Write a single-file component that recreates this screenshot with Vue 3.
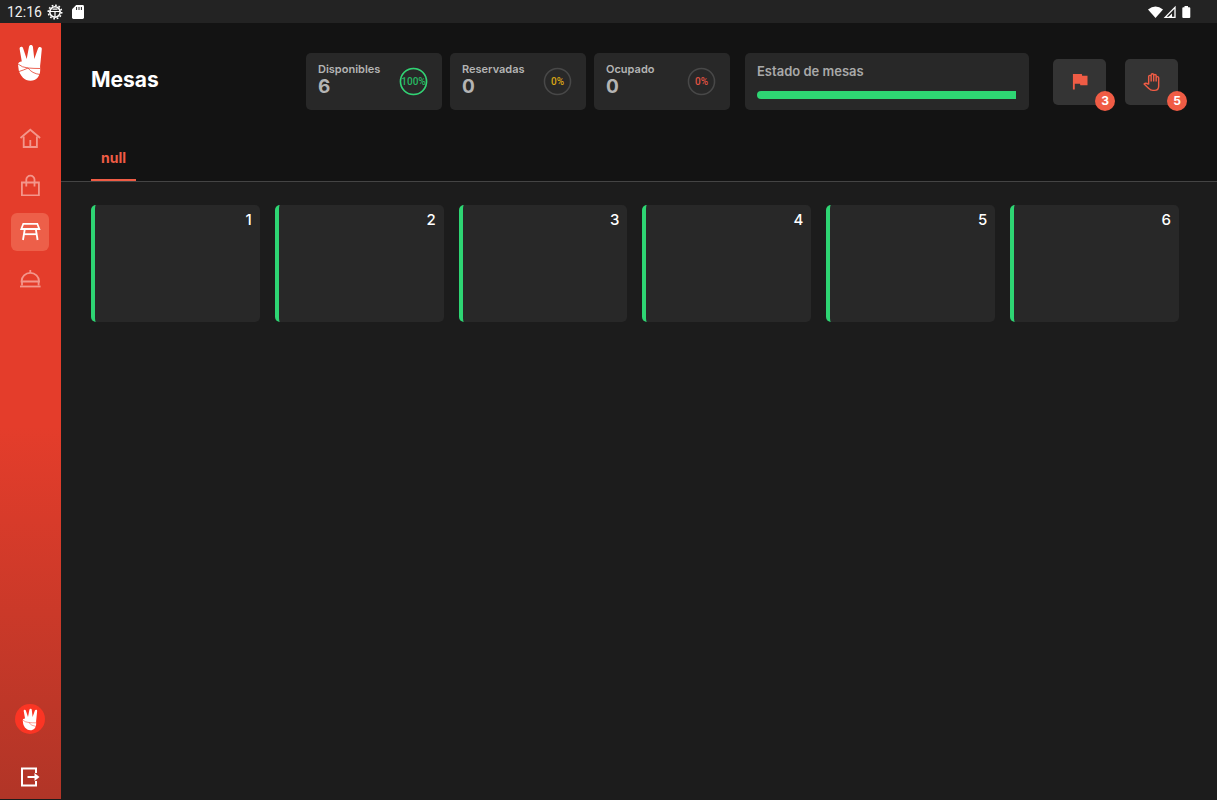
<script setup>
import { computed, ref } from "vue";

const tables = ref([
  { id: 1, status: "free" },
  { id: 2, status: "free" },
  { id: 3, status: "free" },
  { id: 4, status: "free" },
  { id: 5, status: "free" },
  { id: 6, status: "free" }
]);

const zones = ref(["null"]);
const activeZone = ref("null");
const activeNav = ref("tables");

const navItems = [
  { id: "home", paths: ["M1.5 11 11.300 2.700l9.800 8.300", "M4.700 9.500v10.500h13.200V9.500", "M11.300 20V13"] },
  { id: "orders", paths: ["M2.900 8.500h17v13h-17z", "M7.300 12.500V5.500a4.100 3.800 0 0 1 8.200 0V12.500"] },
  { id: "tables", paths: ["M4.300 2.800h14l2 5.200H2.300z", "M5.800 8 4 19", "M16.800 8 18.600 19", "M5 13.200h12.600"] },
  { id: "service", paths: ["M2.500 13.500a8.800 8.600 0 0 1 17.600 0z", "M1 18.500h20.600", "M11.300 5V2", "M3 13.500v4M19.600 13.500v4"] }
];

const countOf = (status) => tables.value.filter((t) => t.status === status).length;

const stats = computed(() =>
  [
    { id: "free", label: "Disponibles", color: "#2ed573" },
    { id: "reserved", label: "Reservadas", color: "#d9a514" },
    { id: "busy", label: "Ocupado", color: "#e25343" }
  ].map((s) => {
    const count = countOf(s.id);
    return { ...s, count, percent: Math.round((count / tables.value.length) * 100) };
  })
);

const alerts = { flags: 3, calls: 5 };
</script>

<template>
  <div class="screen">
    <div class="status-bar">
      <span class="clock">12:16</span>
      <svg class="status-gear" viewBox="0 0 16 16" fill="none" stroke="#fff">
        <circle cx="8" cy="8" r="5.2" stroke-width="1.6" />
        <circle cx="8" cy="8" r="6.7" stroke-width="1.6" stroke-dasharray="1.7 1.8" />
        <path d="M3 7.5h10M8 8v5M5.5 5.2h5" stroke-width="1.2" />
      </svg>
      <svg class="status-card" viewBox="0 0 12 14">
        <path fill="#fff" d="M4.2 0H10.6Q12 0 12 1.4V12.6Q12 14 10.6 14H1.4Q0 14 0 12.6V4.2z" />
        <path stroke="#232323" stroke-width="1" d="M4.6 2v3M7 2v3M9.4 2v3" />
      </svg>
      <svg class="status-signal" viewBox="0 0 43 14">
        <path fill="#fff" d="M0 4.4Q7.5-1.4 15 4.4L7.5 13z" />
        <path fill="none" stroke="#fff" stroke-width="1.3" d="M27 2.4V12.3H17.200z" />
        <path fill="#fff" d="M24 8.500v3.500h-3.500z" />
        <path fill="#fff" d="M36.5 1h3.5v1.2h1.3q1 0 1 1V12q0 1-1 1h-6q-1 0-1-1V3.2q0-1 1-1h1.2z" />
      </svg>
    </div>

    <div class="layout">
      <aside class="sidebar">
        <svg class="logo" viewBox="0 0 26 38">
          <path
            fill="#fff"
            d="M2.6 4.8C2.4 2.3 5.5 2 6.1 4.2L9.7 15 12 2.8C12.4.5 15.6.5 15.9 2.8L17.3 15 21.1 4.3C21.9 2.1 25 2.7 24.8 5L23.6 17.5Q22.8 22 23.2 26C23.2 32 19.5 36.8 13.5 36.8 7.5 36.8 3.4 31.8 1.8 26.5L1 20.5C.8 18.7 2.8 17.2 4.8 17.4z"
          />
          <path
            fill="none"
            stroke="#e43d2b"
            stroke-width="0.8"
            d="M1 20Q5 23.5 11 24T23 24.5M2 27.5Q7 26 11 24M11 24Q15 29.5 23 30.5"
          />
        </svg>

        <nav class="nav">
          <button
            v-for="item in navItems"
            :key="item.id"
            type="button"
            class="nav-item"
            :class="{ active: item.id === activeNav }"
            :aria-label="item.id"
            @click="activeNav = item.id"
          >
            <svg viewBox="0 0 22 22">
              <path v-for="d in item.paths" :key="d" :d="d" />
            </svg>
          </button>
        </nav>

        <div class="avatar">
          <svg viewBox="0 0 26 38">
            <path
              fill="#fff"
              d="M2.6 4.8C2.4 2.3 5.5 2 6.1 4.2L9.7 15 12 2.8C12.4.5 15.6.5 15.9 2.8L17.3 15 21.1 4.3C21.9 2.1 25 2.7 24.8 5L23.6 17.5Q22.8 22 23.2 26C23.2 32 19.5 36.8 13.5 36.8 7.5 36.8 3.4 31.8 1.8 26.5L1 20.5C.8 18.7 2.8 17.2 4.8 17.4z"
            />
            <path fill="none" stroke="#fb3524" stroke-width="0.8" d="M1 20Q5 23.5 11 24T23 24.5M11 24Q15 29.5 23 30.5" />
          </svg>
        </div>

        <button type="button" class="logout" aria-label="logout">
          <svg viewBox="0 0 20 20" fill="none" stroke="#fff" stroke-width="2">
            <path d="M16 6V1.5H2v17h14V14" />
            <path d="M7.5 10H16" />
            <path fill="#fff" stroke="none" d="M14.5 6 19.5 10l-5 4z" />
          </svg>
        </button>
      </aside>

      <main class="main">
        <header class="header">
          <div class="top-row">
            <h1 class="title">Mesas</h1>

            <div class="stats">
              <div v-for="stat in stats" :key="stat.id" class="stat">
                <div>
                  <div class="stat-label">{{ stat.label }}</div>
                  <div class="stat-count">{{ stat.count }}</div>
                </div>
                <div class="ring">
                  <svg viewBox="0 0 30 30">
                    <circle cx="15" cy="15" r="13.5" stroke="#484848" />
                    <circle
                      v-if="stat.percent"
                      cx="15"
                      cy="15"
                      r="13.5"
                      pathLength="100"
                      :stroke="stat.color"
                      :stroke-dasharray="`${stat.percent} 100`"
                    />
                  </svg>
                  <span class="ring-text" :class="stat.id">{{ stat.percent }}%</span>
                </div>
              </div>
            </div>

            <div class="state">
              <div class="state-label">Estado de mesas</div>
              <div class="bar">
                <div
                  v-for="stat in stats"
                  :key="stat.id"
                  :style="{ width: stat.percent + '%', background: stat.color }"
                ></div>
              </div>
            </div>

            <div class="actions">
              <button type="button" class="action">
                <svg viewBox="0 0 24 24" fill="#ef5c45">
                  <path d="M14.600 4.500 14.200 2.500H3.500v18.500h2.200v-7h6.300l.4 2h8.600V4.500z" />
                </svg>
                <span class="badge">{{ alerts.flags }}</span>
              </button>
              <button type="button" class="action">
                <svg viewBox="0 0 24 24" fill="none" stroke="#ef5c45" stroke-width="1.7" stroke-linejoin="round">
                  <path
                    d="M8 15V5.500a1.500 1.500 0 0 1 3 0V3.500a1.500 1.500 0 0 1 3 0V4.500a1.500 1.500 0 0 1 3 0V7a1.500 1.500 0 0 1 3 0V17q0 5-5 5h-2q-3 0-4.500-2L2.500 14.500q2-2 5.500.500M11 5v6.500M14 4v7.500M17 5.500v6"
                  />
                </svg>
                <span class="badge">{{ alerts.calls }}</span>
              </button>
            </div>
          </div>

          <div class="tabs">
            <button
              v-for="zone in zones"
              :key="zone"
              type="button"
              class="tab"
              :class="{ active: zone === activeZone }"
              @click="activeZone = zone"
            >
              {{ zone }}
            </button>
          </div>
        </header>

        <section class="tables">
          <button v-for="table in tables" :key="table.id" type="button" class="table-card">
            {{ table.id }}
          </button>
        </section>
      </main>
    </div>
  </div>
</template>

<style>
body {
  margin: 0;
  background: #1c1c1c;
}
</style>

<style scoped>
* {
  box-sizing: border-box;
}

.screen {
  min-height: 100vh;
  display: flex;
  flex-direction: column;
  padding-bottom: 1px;
  background: #1c1c1c;
  font-family: Inter, "Liberation Sans", sans-serif;
}

button {
  padding: 0;
  border: 0;
  background: none;
  font-family: inherit;
  cursor: pointer;
}

svg {
  display: block;
}

/* status bar */
.status-bar {
  display: flex;
  align-items: center;
  height: 23px;
  padding: 0 26px 0 7px;
  background: #232323;
}

.clock {
  color: #f1f1f1;
  font-family: Roboto, sans-serif;
  font-size: 14px;
}

.status-gear {
  width: 16px;
  height: 16px;
  margin-left: 5px;
}

.status-card {
  width: 12px;
  height: 14px;
  margin-left: 9px;
}

.status-signal {
  width: 43px;
  height: 14px;
  margin-left: auto;
}

.layout {
  flex: 1;
  display: flex;
}

/* sidebar */
.sidebar {
  width: 61px;
  display: flex;
  flex-direction: column;
  align-items: center;
  padding: 21px 1px 12px 0;
  background: linear-gradient(#e43d2b 52%, #b13527);
}

.logo {
  width: 26px;
  height: 38px;
}

.nav {
  display: flex;
  flex-direction: column;
  gap: 9px;
  margin-top: 37px;
}

.nav-item {
  width: 38px;
  height: 38px;
  display: grid;
  place-items: center;
  border-radius: 6px;
}

.nav-item svg {
  width: 22px;
  height: 22px;
  fill: none;
  stroke: #f3968b;
  stroke-width: 1.8;
}

.nav-item.active {
  background: #ed5f49;
}

.nav-item.active svg {
  stroke: #fff;
}

.avatar {
  width: 30px;
  height: 30px;
  display: grid;
  place-items: center;
  margin-top: auto;
  border-radius: 50%;
  background: #fb3524;
}

.avatar svg {
  width: 16px;
  height: 23px;
}

.logout {
  margin-top: 33px;
}

.logout svg {
  width: 20px;
  height: 20px;
}

/* header */
.main {
  flex: 1;
  min-width: 0;
}

.header {
  padding-top: 30px;
  border-bottom: 1px solid #444;
  background: #131313;
}

.top-row {
  display: flex;
  align-items: center;
  padding: 0 39px 0 30px;
}

.title {
  flex: 1;
  margin: 0;
  padding-bottom: 4px;
  color: #fff;
  font-size: 21px;
  font-weight: 700;
  line-height: 28px;
}

.stats {
  display: flex;
  gap: 8px;
}

.stat {
  width: 136px;
  height: 57px;
  display: flex;
  justify-content: space-between;
  align-items: center;
  padding: 0 14px 0 12px;
  border-radius: 5px;
  background: #282828;
}

.stat-label {
  color: #b4b4b4;
  font-size: 11px;
  font-weight: 600;
  line-height: 14px;
}

.stat-count {
  margin-bottom: 3px;
  color: #b4b4b4;
  font-size: 19px;
  font-weight: 700;
  line-height: 22px;
}

.ring {
  display: grid;
  place-items: center;
}

.ring > * {
  grid-area: 1 / 1;
}

.ring svg {
  width: 29px;
  height: 29px;
  fill: none;
  stroke-width: 1.6;
}

.ring-text {
  width: 29px;
  font-family: Roboto, sans-serif;
  font-size: 10px;
  font-weight: 500;
  text-align: center;
}

.ring-text.free {
  color: #27b863;
}

.ring-text.reserved {
  color: #d9a514;
}

.ring-text.busy {
  color: #e25343;
}

.state {
  width: 284px;
  height: 57px;
  margin-left: 15px;
  padding: 10px 13px 0 12px;
  border-radius: 5px;
  background: #282828;
}

.state-label {
  color: #a9a9a9;
  font-size: 13px;
  font-weight: 600;
  line-height: 16px;
}

.bar {
  display: flex;
  height: 8px;
  margin-top: 12px;
  overflow: hidden;
  border-radius: 4px 0 0 4px;
}

.actions {
  display: flex;
  gap: 19px;
  margin-left: 24px;
}

.action {
  position: relative;
  width: 53px;
  height: 46px;
  display: grid;
  place-items: center;
  border-radius: 5px;
  background: #343434;
}

.action svg {
  width: 20px;
  height: 20px;
}

.badge {
  position: absolute;
  right: -9px;
  bottom: -6px;
  width: 20px;
  height: 20px;
  border-radius: 50%;
  background: #f05c45;
  color: #fff;
  font-size: 12px;
  font-weight: 700;
  line-height: 20px;
  text-align: center;
}

.tabs {
  display: flex;
  margin-top: 32px;
  padding-left: 30px;
}

.tab {
  height: 39px;
  padding: 0 10px 6px;
  border-bottom: 2px solid transparent;
  color: #ef5c45;
  font-size: 14px;
  font-weight: 700;
}

.tab.active {
  border-bottom-color: #ef5c45;
}

/* tables */
.tables {
  display: grid;
  grid-template-columns: repeat(6, 1fr);
  gap: 15px;
  padding: 23px 38px 23px 30px;
}

.table-card {
  height: 117px;
  display: flex;
  justify-content: flex-end;
  align-items: flex-start;
  padding: 5px 8px;
  border-left: 4px solid #2ed573;
  border-radius: 5px;
  background: #282828;
  color: #fff;
  font-size: 15px;
  font-weight: 500;
  line-height: 20px;
}
</style>
